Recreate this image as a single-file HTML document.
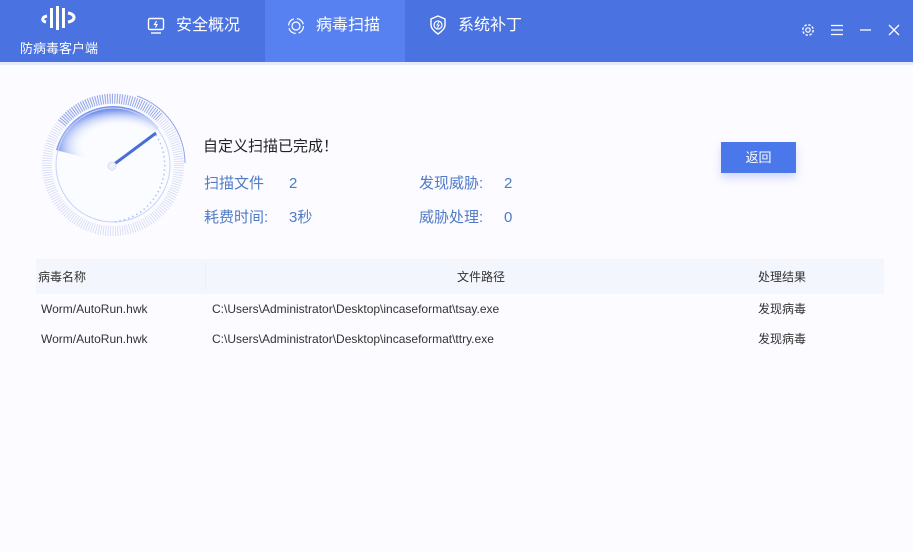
<!DOCTYPE html>
<html><head><meta charset="utf-8"><style>
*{margin:0;padding:0;box-sizing:border-box}
body{width:913px;height:552px;overflow:hidden;background:#fcfbff;font-family:"Liberation Sans","Noto Sans CJK SC",sans-serif;position:relative}
.hd{position:absolute;left:0;top:0;width:913px;height:62px;background:#4a73e1}
.strip{position:absolute;left:0;top:62px;width:913px;height:3px;background:#e6ebfb}
.tab{position:absolute;top:0;height:62px;color:#fff;font-size:16px;line-height:54px}
.abs{position:absolute}
.lbl{color:#4f7bc7;font-size:15px;position:absolute;line-height:20px;height:20px}
.th{position:absolute;left:36px;top:259px;width:848px;height:35px;background:#f4f6fd}
.t{position:absolute;font-size:12px;color:#333;line-height:16px;height:16px}
</style></head><body>
<div class="hd"></div>
<div class="strip"></div>
<svg class="abs" style="left:38px;top:4px" width="42" height="28" viewBox="0 0 42 28">
<path d="M9 12 C4 13 3 17 8 18" stroke="#fff" stroke-width="3" fill="none"/>
<rect x="12" y="4" width="3" height="20" fill="#fff"/><rect x="18" y="2" width="3" height="24" fill="#fff"/><rect x="24" y="4" width="3" height="20" fill="#fff"/>
<path d="M30 9 C38 10 38 17 30 18" stroke="#fff" stroke-width="3" fill="none"/>
</svg>
<div class="abs" style="left:20px;top:38px;color:#fff;font-size:13px">防病毒客户端</div>
<div class="tab" style="left:125px;width:140px"><svg class="abs" style="left:22px;top:17px" width="18" height="18" viewBox="0 0 18 18"><rect x="1.5" y="1.5" width="15" height="11" rx="1.5" fill="none" stroke="#fff" stroke-width="1.4"/><path d="M9.5 4 L7.5 7.5 H10 L8.5 10.5" stroke="#fff" stroke-width="1.2" fill="none"/><path d="M4 16 H14" stroke="#fff" stroke-width="1.4"/></svg><span class="abs" style="left:51px;top:-1px">安全概况</span></div>
<div class="tab" style="left:265px;width:140px;background:#5781f0"><svg class="abs" style="left:22px;top:17px" width="18" height="18" viewBox="0 0 18 18"><circle cx="9" cy="9" r="7.5" fill="none" stroke="#fff" stroke-width="1.2" stroke-dasharray="9 3"/><circle cx="9" cy="9" r="4" fill="none" stroke="#fff" stroke-width="1.2"/></svg><span class="abs" style="left:51px;top:-1px">病毒扫描</span></div>
<div class="tab" style="left:405px;width:140px"><svg class="abs" style="left:24px;top:15px" width="18" height="20" viewBox="0 0 18 20"><path d="M9 1 L16 4 V10 C16 14 12 17 9 19 C6 17 2 14 2 10 V4 Z" fill="none" stroke="#fff" stroke-width="1.4"/><circle cx="9" cy="10" r="4" fill="none" stroke="#fff" stroke-width="1.2"/><path d="M10 7 L8 10 H10 L8.5 13" stroke="#fff" stroke-width="1"/></svg><span class="abs" style="left:53px;top:-1px">系统补丁</span></div>
<svg class="abs" style="left:800px;top:22px" width="104" height="16" viewBox="0 0 104 16">
<circle cx="8" cy="8" r="2.2" fill="none" stroke="#fff" stroke-width="1.2"/><circle cx="8" cy="8" r="5.2" fill="none" stroke="#fff" stroke-width="1.4" stroke-dasharray="2.5 1.6"/>
<path d="M31 3.5H43M31 8H43M31 12.5H43" stroke="#fff" stroke-width="1.3"/>
<path d="M60 8H71" stroke="#fff" stroke-width="1.3"/>
<path d="M89 3L99 13M99 3L89 13" stroke="#fff" stroke-width="1.3"/>
</svg>
<svg class="abs" style="left:38px;top:90px" width="152" height="152" viewBox="0 0 152 152">
<defs>
<radialGradient id="g" cx="0.62" cy="0.68" r="0.62"><stop offset="0.55" stop-color="#fff" stop-opacity="0"/><stop offset="1" stop-color="#5f80e8" stop-opacity="0.85"/></radialGradient>
</defs>
<circle cx="75" cy="75" r="66" fill="none" stroke="#d3dbf5" stroke-width="10" stroke-dasharray="0.8 1.6"/>
<path d="M24 33 A66 66 0 0 1 122 28" fill="none" stroke="#8a9fe6" stroke-width="10" stroke-dasharray="0.8 1.6"/>
<circle cx="75" cy="75" r="59" fill="#fbfcff"/>
<path d="M75 75 L18 60 A59 59 0 0 1 121 38 Z" fill="url(#g)"/>
<circle cx="75" cy="75" r="57" fill="none" stroke="#c6d3f8" stroke-width="1"/>
<path d="M118 45 A57 57 0 0 1 75 132" fill="none" stroke="#aac2f5" stroke-width="1.5" stroke-dasharray="1.5 3"/>
<path d="M99 6 A72 72 0 0 1 147 73" fill="none" stroke="#8fa7ea" stroke-width="1"/>
<line x1="75" y1="75" x2="118" y2="43" stroke="#4a6ed8" stroke-width="3"/>
<circle cx="74" cy="76" r="4" fill="#eef1fb" stroke="#d6ddf3"/>
</svg>
<div class="abs" style="left:203px;top:137px;font-size:15px;color:#222;line-height:20px">自定义扫描已完成！</div>
<div class="lbl" style="left:204px;top:174px">扫描文件</div><div class="lbl" style="left:289px;top:174px">2</div>
<div class="lbl" style="left:204px;top:208px">耗费时间:</div><div class="lbl" style="left:289px;top:208px">3秒</div>
<div class="lbl" style="left:419px;top:174px">发现威胁:</div><div class="lbl" style="left:504px;top:174px">2</div>
<div class="lbl" style="left:419px;top:208px">威胁处理:</div><div class="lbl" style="left:504px;top:208px">0</div>
<div class="abs" style="left:721px;top:142px;width:75px;height:31px;background:#4a78ea;color:#fff;font-size:13px;text-align:center;line-height:31px;box-shadow:0 5px 8px rgba(74,120,234,0.25)">返回</div>
<div class="th"></div>
<div class="abs" style="left:205px;top:262px;width:1px;height:29px;background:#eef0f8"></div>
<div class="t" style="left:38px;top:269px">病毒名称</div>
<div class="t" style="left:457px;top:269px">文件路径</div>
<div class="t" style="left:758px;top:269px">处理结果</div>
<div class="t" style="left:41px;top:301px">Worm/AutoRun.hwk</div>
<div class="t" style="left:212px;top:301px">C:\Users\Administrator\Desktop\incaseformat\tsay.exe</div>
<div class="t" style="left:758px;top:301px">发现病毒</div>
<div class="t" style="left:41px;top:331px">Worm/AutoRun.hwk</div>
<div class="t" style="left:212px;top:331px">C:\Users\Administrator\Desktop\incaseformat\ttry.exe</div>
<div class="t" style="left:758px;top:331px">发现病毒</div>
</body></html>
